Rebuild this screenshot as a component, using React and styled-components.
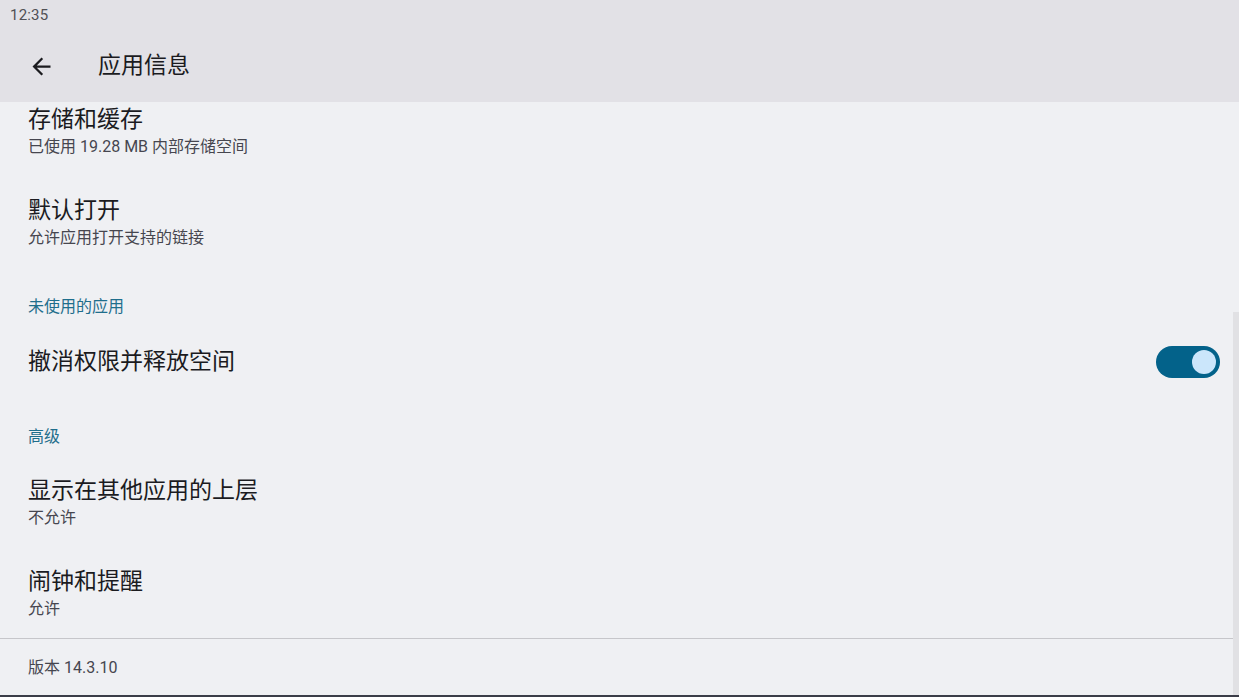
import React, { useState } from "react";
import styled, { createGlobalStyle } from "styled-components";

const Global = createGlobalStyle`
  html, body {
    margin: 0;
    padding: 0;
    background: #eff0f3;
  }
  body {
    font-family: Roboto, "Noto Sans CJK SC", sans-serif;
  }
`;

const Screen = styled.div`
  position: relative;
  width: 1239px;
  height: 697px;
  overflow: hidden;
  display: flex;
  flex-direction: column;
  background: #eff0f3;
`;

const Top = styled.header`
  background: #e2e1e6;
  height: 102px;
  flex: none;
  display: flex;
  flex-direction: column;
`;

const StatusBar = styled.div`
  height: 30px;
  padding-left: 10px;
  display: flex;
  align-items: center;
  font-size: 15px;
  color: #505055;
  letter-spacing: 0.2px;
`;

const Toolbar = styled.div`
  flex: 1;
  display: flex;
  align-items: center;
  padding-left: 28px;
  gap: 43px;
`;

const BackButton = styled.button`
  border: none;
  background: none;
  padding: 0;
  width: 27px;
  height: 27px;
  display: flex;
  color: #1b1b1f;
  cursor: pointer;
`;

const Title = styled.h1`
  margin: 0;
  font-size: 23px;
  font-weight: 400;
  color: #1b1b1f;
  line-height: 30px;
`;

const List = styled.main`
  flex: 1;
  display: flex;
  flex-direction: column;
`;

const Item = styled.div`
  display: flex;
  align-items: center;
  justify-content: space-between;
  padding: ${(p) => (p.$first ? "3px" : "20px")} 19px
    ${(p) => (p.$sub ? "17px" : "19px")} 28px;
`;

const Texts = styled.div`
  display: flex;
  flex-direction: column;
`;

const ItemTitle = styled.div`
  font-size: 23px;
  line-height: 30px;
  color: #1b1b1f;
`;

const ItemSub = styled.div`
  font-size: 16px;
  line-height: 24px;
  color: #46464f;
`;

const Section = styled.div`
  padding: 29px 28px 8px;
  font-size: 16px;
  line-height: 22px;
  color: #1f6e8c;
`;

const Track = styled.button`
  width: 64px;
  height: 32px;
  border-radius: 16px;
  border: none;
  padding: 0 4px;
  display: flex;
  align-items: center;
  justify-content: ${(p) => (p.$on ? "flex-end" : "flex-start")};
  background: ${(p) => (p.$on ? "#03628a" : "#dfe3eb")};
  cursor: pointer;
`;

const Thumb = styled.span`
  width: 24px;
  height: 24px;
  border-radius: 50%;
  background: ${(p) => (p.$on ? "#cbe6fb" : "#72787e")};
`;

const Footer = styled.div`
  border-top: 1px solid #c6c6ca;
  margin-right: 5px;
  padding: 18px 28px 0;
  font-size: 16px;
  line-height: 22px;
  color: #46464f;
`;

const ScrollThumb = styled.div`
  position: absolute;
  right: 0;
  top: 312px;
  bottom: 0;
  width: 6px;
  background: #e1e1e4;
`;

const BottomEdge = styled.div`
  position: absolute;
  left: 0;
  right: 0;
  bottom: 0;
  height: 2px;
  background: #3b3d48;
`;

const BackIcon = () => (
  <svg width="27" height="27" viewBox="0 0 24 24" fill="currentColor">
    <path d="M20 11H7.83l5.59-5.59L12 4l-8 8 8 8 1.41-1.41L7.83 13H20v-2z" />
  </svg>
);

const Row = ({ title, sub, first, children }) => (
  <Item $sub={!!sub} $first={first}>
    <Texts>
      <ItemTitle>{title}</ItemTitle>
      {sub && <ItemSub>{sub}</ItemSub>}
    </Texts>
    {children}
  </Item>
);

export default function App() {
  const [on, setOn] = useState(true);

  return (
    <Screen>
      <Global />
      <Top>
        <StatusBar>12:35</StatusBar>
        <Toolbar>
          <BackButton aria-label="返回">
            <BackIcon />
          </BackButton>
          <Title>应用信息</Title>
        </Toolbar>
      </Top>
      <List>
        <Row first title="存储和缓存" sub="已使用 19.28 MB 内部存储空间" />
        <Row title="默认打开" sub="允许应用打开支持的链接" />
        <Section>未使用的应用</Section>
        <Row title="撤消权限并释放空间">
          <Track $on={on} onClick={() => setOn(!on)}>
            <Thumb $on={on} />
          </Track>
        </Row>
        <Section>高级</Section>
        <Row title="显示在其他应用的上层" sub="不允许" />
        <Row title="闹钟和提醒" sub="允许" />
        <Footer>版本 14.3.10</Footer>
      </List>
      <ScrollThumb />
      <BottomEdge />
    </Screen>
  );
}
